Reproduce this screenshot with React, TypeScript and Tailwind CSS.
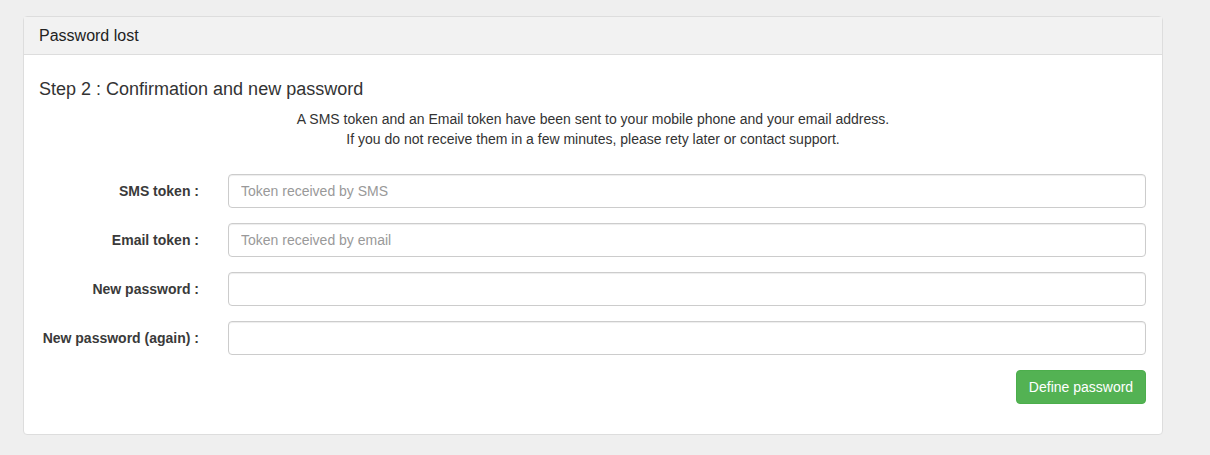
export default function App() {
  const fields = [
    { label: "SMS token :", placeholder: "Token received by SMS" },
    { label: "Email token :", placeholder: "Token received by email" },
    { label: "New password :", placeholder: "", type: "password" },
    { label: "New password (again) :", placeholder: "", type: "password" },
  ];

  return (
    <div
      className="min-h-[455px] bg-[#efefef] pt-4 pl-[23px] text-[14px] text-[#333]"
      style={{ fontFamily: '"Liberation Sans", Arial, sans-serif' }}
    >
      <div className="w-[1140px] rounded border border-[#ddd] bg-white">
        {/* header */}
        <div className="h-[38px] border-b border-[#ddd] bg-[#f2f2f2] px-[15px] flex items-center text-[16px] text-[#222]">
          Password lost
        </div>

        {/* body */}
        <div className="px-[15px] pt-[24px] pb-[30px]">
          <h4 className="text-[18px] leading-[20px]">Step 2 : Confirmation and new password</h4>
          <p className="mt-[10px] text-center text-[14px] leading-[20px]">
            A SMS token and an Email token have been sent to your mobile phone and your email address.
            <br />
            If you do not receive them in a few minutes, please rety later or contact support.
          </p>

          <div className="mt-[25px] flex flex-col gap-[15px]">
            {fields.map((f) => (
              <div key={f.label} className="flex items-center">
                <label className="w-[160px] text-right font-bold text-[14px] text-[#3a3a3a]">{f.label}</label>
                <input
                  type={f.type || "text"}
                  placeholder={f.placeholder}
                  className="ml-[29px] h-[34px] w-[918px] rounded border border-[#ccc] px-3 text-[14px] text-[#555] placeholder:text-[#999] shadow-[inset_0_1px_1px_rgba(0,0,0,0.075)] outline-none"
                />
              </div>
            ))}
          </div>

          <div className="mt-[15px] flex justify-end pr-px">
            <button className="h-[34px] w-[130px] rounded border border-[#4cae4c] bg-[#53b253] text-[14px] text-white">
              Define password
            </button>
          </div>
        </div>
      </div>
    </div>
  );
}
